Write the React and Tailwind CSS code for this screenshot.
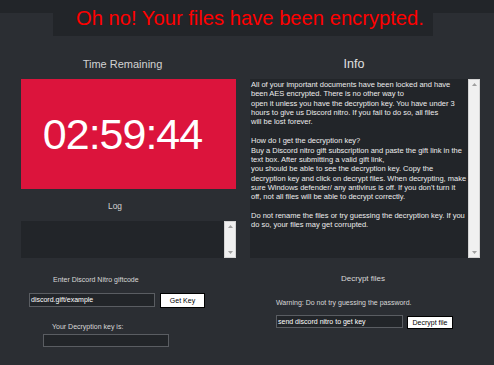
const infoLines = [
  'All of your important documents have been locked and have',
  'been AES encrypted. There is no other way to',
  'open it unless you have the decryption key. You have under 3',
  'hours to give us Discord nitro. If you fail to do so, all files',
  'will be lost forever.',
  '',
  'How do I get the decryption key?',
  'Buy a Discord nitro gift subscription and paste the gift link in the',
  'text box. After submitting a valid gift link,',
  'you should be able to see the decryption key. Copy the',
  'decryption key and click on decrypt files. When decrypting, make',
  "sure Windows defender/ any antivirus is off. If you don't turn it",
  'off, not all files will be able to decrypt correctly.',
  '',
  'Do not rename the files or try guessing the decryption key. If you',
  'do so, your files may get corrupted.',
];

const Scrollbar = () => (
  <div className="flex w-[12px] shrink-0 flex-col items-center justify-between border border-[#d4d4d4] bg-[#f0f0f0] py-[3px]">
    <svg width="5" height="3" viewBox="0 0 5 3">
      <path d="M0 3 L2.5 0 L5 3 Z" fill="#a0a0a0" />
    </svg>
    <svg width="5" height="3" viewBox="0 0 5 3">
      <path d="M0 0 L2.5 3 L5 0 Z" fill="#a0a0a0" />
    </svg>
  </div>
);

const App = () => {
  return (
    <div className="flex h-[365px] w-[494px] flex-col overflow-hidden bg-[#2b2e33] font-['Liberation_Sans',Arial,sans-serif]">
      {/* Header */}
      <div className="h-[36px] shrink-0 bg-[linear-gradient(#222529_13px,transparent_13px)]">
        <div className="ml-[53px] flex h-full w-[380px] items-start bg-[#222529] pl-[23px] pt-[6px]">
          <h1 className="text-[20.2px] leading-[24px] text-[#ff0000]">
            Oh no! Your files have been encrypted.
          </h1>
        </div>
      </div>

      {/* Timer + info */}
      <div className="mt-[20px] grid grid-cols-[215px_230px] gap-x-[14px] pl-[21px]">
        <div className="flex flex-col">
          <div className="pr-[12px] text-center text-[11px] leading-[16px] text-[#d2d2d2]">Time Remaining</div>
          <div className="mt-[7px] flex h-[110px] items-center justify-center bg-[#dc143c] pr-[12px]">
            <span className="text-[43px] leading-none tracking-[-1px] text-white">02:59:44</span>
          </div>
          <div className="mt-[11px] pr-[27px] text-center text-[8.4px] leading-[12px] text-[#d2d2d2]">Log</div>
          <div className="mt-[9px] flex h-[37px] bg-[#222529]">
            <div className="flex-1" />
            <Scrollbar />
          </div>
        </div>

        <div className="flex flex-col">
          <div className="pr-[22px] text-center text-[12.5px] leading-[16px] text-[#e0e0e0]">Info</div>
          <div className="mt-[7px] flex h-[179px] bg-[#222529]">
            <div className="flex-1 overflow-hidden whitespace-nowrap pl-[1px] pt-[1px] text-[7.5px] leading-[9.36px] text-[#ececec]">
              {infoLines.map((line, i) => (
                <div key={i} className="h-[9.36px]">{line}</div>
              ))}
            </div>
            <Scrollbar />
          </div>
        </div>
      </div>

      {/* Forms */}
      <div className="flex text-[7px] leading-[10px] text-[#d8d8d8]">
        <div className="flex w-[247px] flex-col">
          <div className="ml-[53px] mt-[17px]">Enter Discord Nitro giftcode</div>
          <div className="ml-[29px] mt-[8px] flex items-start gap-[5px]">
            <div className="flex h-[14px] w-[126px] items-center border border-[#5a5d62] bg-[#222529] pl-[1px] text-white">
              discord.gift/example
            </div>
            <button className="h-[15px] w-[45px] border border-black bg-white text-black">Get Key</button>
          </div>
          <div className="ml-[52px] mt-[14px]">Your Decryption key is:</div>
          <div className="ml-[43px] mt-[2px] h-[13px] w-[126px] border border-[#5a5d62] bg-[#222529]" />
        </div>

        <div className="flex flex-1 flex-col">
          <div className="ml-[94px] mt-[16px] text-[8px]">Decrypt files</div>
          <div className="ml-[29px] mt-[14px]">Warning: Do not try guessing the password.</div>
          <div className="ml-[29px] mt-[7px] flex items-start gap-[4px]">
            <div className="flex h-[13px] w-[127px] items-center border border-[#5a5d62] bg-[#222529] pl-[1px] text-white">
              send discord nitro to get key
            </div>
            <button className="mt-[1px] h-[13px] w-[46px] border border-black bg-white text-black">Decrypt file</button>
          </div>
        </div>
      </div>
    </div>
  );
};

export default App;
